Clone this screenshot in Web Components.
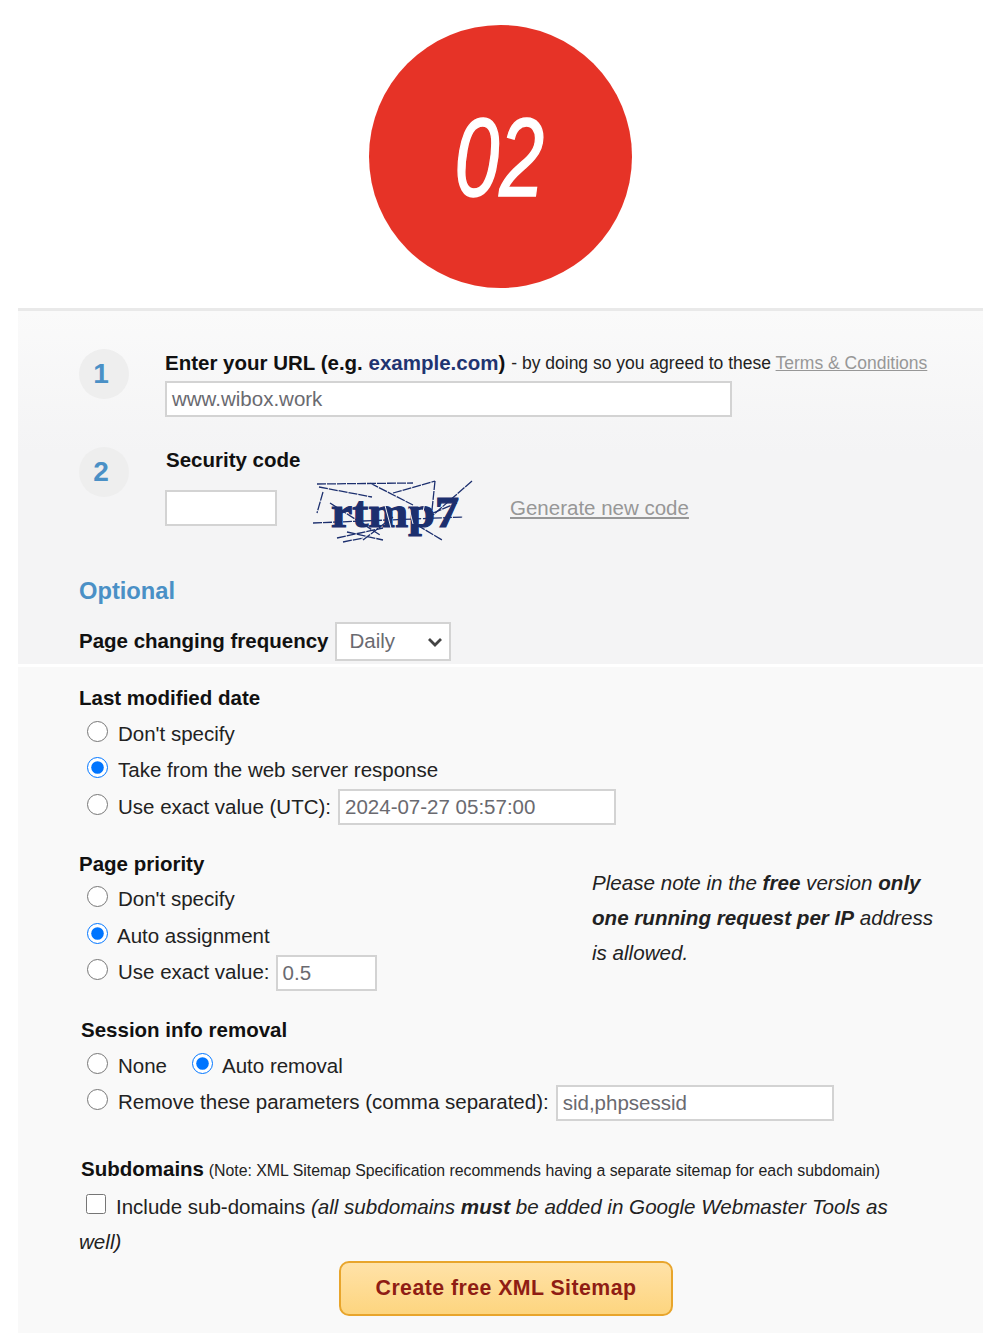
<!DOCTYPE html>
<html>
<head>
<meta charset="utf-8">
<title>Create free XML Sitemap</title>
<style>
  html, body { margin: 0; background: #fff; }
  body { font: 20.5px/1.2 "Liberation Sans", Arial, sans-serif; color: #222; height: 1333px; overflow: hidden; }
  b { font-weight: bold; }
  i { font-size: 20.6px; }
</style>
</head>
<body>
<hero-badge>02</hero-badge>
<form-panel>
  <step-row num="1" style="height:98px">
    <div style="box-sizing:border-box;height:32px;padding-bottom:4px;display:flex;align-items:center;white-space:nowrap">
      <b style="color:#111">Enter your URL (e.g. <span style="color:#1f3471">example.com</span>)</b>
      <small-note style="margin-left:6px;font-size:17.5px;color:#222">- by doing so you agreed to these <link-text>Terms &amp; Conditions</link-text></small-note>
    </div>
    <text-field width="567">www.wibox.work</text-field>
  </step-row>
  <step-row num="2" style="height:130px">
    <div style="height:26px;line-height:26px;margin-left:1px"><b style="color:#111">Security code</b></div>
    <div style="display:flex;align-items:center;height:66px;margin-top:2px">
      <text-field width="112"></text-field>
      <captcha-image style="margin:6px 0 0 36px"></captcha-image>
      <link-text style="margin-left:37px">Generate new code</link-text>
    </div>
  </step-row>
  <h-optional>Optional</h-optional>
  <div style="display:flex;align-items:center;height:39px;margin-top:17px">
    <b style="color:#111;margin-right:7px">Page changing frequency</b>
    <select-box>Daily</select-box>
  </div>
  <div slot="lower">
    <opt-group title="Last modified date">
      <radio-row>Don't specify</radio-row>
      <radio-row checked>Take from the web server response</radio-row>
      <radio-row>Use exact value (UTC):<text-field slot="after" width="278">2024-07-27 05:57:00</text-field></radio-row>
    </opt-group>
    <div style="position:relative;margin-top:25px">
      <opt-group title="Page priority">
        <radio-row>Don't specify</radio-row>
        <radio-row checked gap="9">Auto assignment</radio-row>
        <radio-row after-gap="6">Use exact value:<text-field slot="after" width="101">0.5</text-field></radio-row>
      </opt-group>
      <side-note style="position:absolute;left:513px;top:14px"><i>Please note in the <b>free</b> version <b>only<br>one running request per IP</b> address<br>is allowed.</i></side-note>
    </div>
    <opt-group title="Session info removal" indent="2" style="margin-top:26px">
      <div style="display:flex">
        <radio-row>None</radio-row>
        <radio-row checked gap="9" style="margin-left:10px">Auto removal</radio-row>
      </div>
      <radio-row>Remove these parameters (comma separated):<text-field slot="after" width="278">sid,phpsessid</text-field></radio-row>
    </opt-group>
    <sub-domains style="margin-top:35px"></sub-domains>
    <action-button>Create free XML Sitemap</action-button>
  </div>
</form-panel>

<script>
class HeroBadge extends HTMLElement {
  connectedCallback() {
    this.attachShadow({ mode: 'open' }).innerHTML = `
      <style>
        :host { display: block; height: 283px; padding-top: 25px; }
        .circle { width: 263px; height: 263px; margin: 0 auto; position: relative; left: 0.5px; border-radius: 50%; background: #e63327; color: #fff; display: flex; align-items: center; justify-content: center; }
        span { font: italic 400 112px/1 "Liberation Sans", sans-serif; display: block; transform: scaleX(0.72); position: relative; left: -1px; top: 1px; -webkit-text-stroke: 1.6px #fff; }
      </style>
      <div class="circle"><span><slot></slot></span></div>`;
  }
}

class FormPanel extends HTMLElement {
  connectedCallback() {
    this.attachShadow({ mode: 'open' }).innerHTML = `
      <style>
        :host { display: block; margin: 0 17px 0 18px; }
        .top { height: 315px; padding: 38px 0 0 61px; border-top: 3px solid #e9e9e9; background: linear-gradient(#fafafa, #f4f4f5 40%); }
        .lower { margin-top: 3px; padding: 18px 0 0 61px; background: #f9f9f9; height: 650px; }
      </style>
      <div class="top"><slot></slot></div>
      <div class="lower"><slot name="lower"></slot></div>`;
  }
}

class StepRow extends HTMLElement {
  connectedCallback() {
    this.attachShadow({ mode: 'open' }).innerHTML = `
      <style>
        :host { display: flex; box-sizing: border-box; }
        .num { flex: none; box-sizing: border-box; width: 50px; height: 50px; padding-right: 6px; border-radius: 50%; background: #eeeeee; color: #4a90c6; font: bold 28px/50px "Liberation Sans", sans-serif; text-align: center; margin-right: 36px; }
        .body { flex: 1; min-width: 0; }
      </style>
      <div class="num">${this.getAttribute('num')}</div>
      <div class="body"><slot></slot></div>`;
  }
}

class TextField extends HTMLElement {
  connectedCallback() {
    this.attachShadow({ mode: 'open' }).innerHTML = `
      <style>
        :host { display: block; box-sizing: border-box; flex: none; width: ${this.getAttribute('width')}px; height: 36px; background: #fff; border: 2px solid #d3d3d3; padding-left: 5px; color: #6a6a70; font-size: 20.5px; line-height: 32px; white-space: nowrap; overflow: hidden; }
      </style>
      <slot></slot>`;
  }
}

class LinkText extends HTMLElement {
  connectedCallback() {
    this.attachShadow({ mode: 'open' }).innerHTML = `
      <style>:host { display: inline; color: #979797; text-decoration: underline; white-space: nowrap; }</style><slot></slot>`;
  }
}

class SmallNote extends HTMLElement {
  connectedCallback() {
    this.attachShadow({ mode: 'open' }).innerHTML = `<style>:host { display: inline; white-space: nowrap; }</style><slot></slot>`;
  }
}

class CaptchaImage extends HTMLElement {
  connectedCallback() {
    this.attachShadow({ mode: 'open' }).innerHTML = `
      <style>:host { display: block; flex: none; width: 160px; height: 66px; } svg { display: block; }</style>
      <svg width="160" height="66" viewBox="0 0 160 66">
        <text x="18" y="49" font-family="Liberation Serif, serif" font-weight="bold" font-size="45" fill="#1c2f6e" stroke="#1c2f6e" stroke-width="1.2" textLength="128" lengthAdjust="spacingAndGlyphs">rtmp7</text>
        <g stroke="#1c2f6e" stroke-width="1.3" fill="none" stroke-dasharray="9 1">
          <path d="M4 6 L100 5 M6 9 L59 19 M10 14 L4 35 M57 5 L100 27 M80 15 L122 3 M122 3 L119 32 M159 3 L120 37"/>
          <path d="M0 45 L150 39 M17 25 L67 57 M24 60 L70 50 M30 64 L50 60 M34 54 L70 62 M104 47 L129 62 M50 62 L80 39 M120 35 L144 25"/>
        </g>
        <g stroke="#f4f4f5" stroke-width="1" fill="none">
          <path d="M70 20 L78 50 M96 30 L100 46 M112 24 L108 44"/>
        </g>
      </svg>`;
  }
}

class HOptional extends HTMLElement {
  connectedCallback() {
    this.attachShadow({ mode: 'open' }).innerHTML = `
      <style>:host { display: block; color: #4a90c6; font: bold 23.7px/28px "Liberation Sans", sans-serif; }</style><slot></slot>`;
  }
}

class SelectBox extends HTMLElement {
  connectedCallback() {
    this.attachShadow({ mode: 'open' }).innerHTML = `
      <style>
        :host { display: flex; align-items: center; justify-content: space-between; box-sizing: border-box; width: 116px; height: 39px; background: #fff; border: 2px solid #d3d3d3; padding: 0 6px 0 12px; color: #6a6a70; }
        svg { display: block; }
      </style>
      <slot></slot>
      <svg width="16" height="10" viewBox="0 0 16 10"><path d="M2 2 L8 8 L14 2" fill="none" stroke="#444" stroke-width="2.8"/></svg>`;
  }
}

class OptGroup extends HTMLElement {
  connectedCallback() {
    const indent = this.getAttribute('indent') || 0;
    this.attachShadow({ mode: 'open' }).innerHTML = `
      <style>
        :host { display: block; }
        h3 { margin: 0 0 0 ${indent}px; font: bold 20.5px/26px "Liberation Sans", sans-serif; color: #111; height: 31px; }
        .rows { display: flex; flex-direction: column; }
      </style>
      <h3>${this.getAttribute('title')}</h3>
      <div class="rows"><slot></slot></div>`;
    this.removeAttribute('title');
  }
}

class RadioRow extends HTMLElement {
  connectedCallback() {
    const gap = this.getAttribute('gap') || 10;
    const afterGap = this.getAttribute('after-gap') || 7;
    const on = this.hasAttribute('checked') ? 'checked' : '';
    this.attachShadow({ mode: 'open' }).innerHTML = `
      <style>
        :host { display: flex; align-items: center; height: 36.5px; color: #222; white-space: nowrap; padding-left: 8px; }
        input { width: 21px; height: 21px; margin: -6px ${gap}px 0 0; flex: none; accent-color: #0075ff; }
        .after { margin-left: ${afterGap}px; }
      </style>
      <input type="radio" ${on} tabindex="-1">
      <slot></slot>
      <span class="after"><slot name="after"></slot></span>`;
  }
}

class SideNote extends HTMLElement {
  connectedCallback() {
    this.attachShadow({ mode: 'open' }).innerHTML = `
      <style>:host { display: block; line-height: 35px; color: #222; white-space: nowrap; }</style><slot></slot>`;
  }
}

class SubDomains extends HTMLElement {
  connectedCallback() {
    this.attachShadow({ mode: 'open' }).innerHTML = `
      <style>
        :host { display: block; color: #222; }
        .head { margin-left: 2px; height: 33px; line-height: 26px; white-space: nowrap; }
        .head b { color: #111; font-size: 20.5px; }
        .head small { font-size: 15.85px; margin-left: -1px; }
        .body { line-height: 35px; white-space: nowrap; }
        .body i { font-size: 20.6px; }
        input { width: 20px; height: 20px; margin: 0 10px 0 7px; vertical-align: 0; accent-color: #0075ff; }
      </style>
      <div class="head"><b>Subdomains</b> <small>(Note: XML Sitemap Specification recommends having a separate sitemap for each subdomain)</small></div>
      <div class="body"><input type="checkbox" tabindex="-1">Include sub-domains <i>(all subdomains <b>must</b> be added in Google Webmaster Tools as</i><br><i>well)</i></div>`;
  }
}

class ActionButton extends HTMLElement {
  connectedCallback() {
    this.attachShadow({ mode: 'open' }).innerHTML = `
      <style>
        :host { display: block; box-sizing: border-box; width: 334px; height: 55px; margin: 1.5px 0 0 260px; border: 2px solid #e8a52c; border-radius: 10px; background: linear-gradient(#ffe2a8, #fdd57f); color: #8f1d14; font: bold 21.3px/51px "Liberation Sans", sans-serif; letter-spacing: 0.45px; text-align: center; }
      </style>
      <slot></slot>`;
  }
}

customElements.define('hero-badge', HeroBadge);
customElements.define('form-panel', FormPanel);
customElements.define('step-row', StepRow);
customElements.define('text-field', TextField);
customElements.define('link-text', LinkText);
customElements.define('small-note', SmallNote);
customElements.define('captcha-image', CaptchaImage);
customElements.define('h-optional', HOptional);
customElements.define('select-box', SelectBox);
customElements.define('opt-group', OptGroup);
customElements.define('radio-row', RadioRow);
customElements.define('side-note', SideNote);
customElements.define('sub-domains', SubDomains);
customElements.define('action-button', ActionButton);
</script>
</body>
</html>
